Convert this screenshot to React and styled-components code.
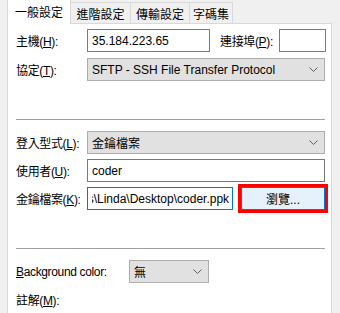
import { useLayoutEffect, useRef } from "react";
import styled, { createGlobalStyle } from "styled-components";

const Global = createGlobalStyle`
  html, body { margin: 0; padding: 0; background: #f0f0f0; }
  body {
    font-family: "Liberation Sans", "Noto Sans CJK TC", sans-serif;
    font-size: 12px;
    color: #000;
  }
`;

const Window = styled.div`
  width: 340px;
  height: 313px;
  overflow: hidden;
  background: #f0f0f0;
`;

const TabStrip = styled.div`
  display: flex;
  align-items: flex-end;
  height: 23px;
  padding-left: 7px;
`;

const Tab = styled.div`
  position: relative;
  display: flex;
  align-items: center;
  justify-content: center;
  box-sizing: border-box;
  width: ${(p) => p.$w}px;
  height: ${(p) => (p.$active ? 25 : 21)}px;
  margin-bottom: ${(p) => (p.$active ? -1 : 0)}px;
  margin-left: ${(p) => (p.$first ? 0 : -1)}px;
  padding-bottom: ${(p) => (p.$active ? 2 : 0)}px;
  border: 1px solid #d9d9d9;
  border-bottom: none;
  background: ${(p) => (p.$active ? "#fff" : "#f0f0f0")};
  z-index: ${(p) => (p.$active ? 2 : 1)};
`;

const Panel = styled.div`
  box-sizing: border-box;
  width: 325px;
  height: 320px;
  margin-left: 7px;
  padding: 5px 5px 0 8px;
  background: #fff;
  border: 1px solid #d9d9d9;
  display: flex;
  flex-direction: column;
`;

const Row = styled.div`
  display: flex;
  align-items: center;
  height: 23px;
  margin-top: ${(p) => p.$mt || 0}px;
`;

const Label = styled.label`
  width: ${(p) => (p.$w ? `${p.$w}px` : "auto")};
  flex: none;
  white-space: nowrap;
  letter-spacing: -0.35px;
  margin-left: ${(p) => p.$ml || 0}px;
`;

const TextBox = styled.input`
  box-sizing: border-box;
  width: ${(p) => p.$w}px;
  height: 23px;
  flex: none;
  margin: 0 0 0 ${(p) => p.$ml || 0}px;
  padding: 0 3px 0 4px;
  font: inherit;
  color: #000;
  background: #fff;
  border: 1px solid ${(p) => (p.$focus ? "#0078d7" : "#7a7a7a")};
  border-radius: 0;
  outline: none;
`;

const Select = styled.div`
  box-sizing: border-box;
  width: ${(p) => p.$w}px;
  height: 23px;
  flex: none;
  display: flex;
  align-items: center;
  justify-content: space-between;
  padding: 0 6px 0 4px;
  background: #e1e1e1;
  border: 1px solid #adadad;
`;

const Button = styled.button`
  box-sizing: border-box;
  width: 84px;
  height: 23px;
  margin-left: 8px;
  flex: none;
  font: inherit;
  color: #000;
  background: #e5f1fb;
  border: 1px solid #0078d7;
  outline: 3px solid #ff0000;
  outline-offset: 0;
  padding: 0;
`;

const Separator = styled.div`
  height: 1px;
  width: 309px;
  background: #a0a0a0;
  margin-top: ${(p) => p.$mt}px;
`;

const Chevron = () => (
  <svg width="9" height="5" viewBox="0 0 9 5">
    <polyline points="0.5,0.5 4.5,4.5 8.5,0.5" fill="none" stroke="#606060" strokeWidth="1" />
  </svg>
);

export default function App() {
  const keyRef = useRef(null);
  useLayoutEffect(() => {
    const el = keyRef.current;
    if (el) el.scrollLeft = el.scrollWidth;
  }, []);

  return (
    <Window>
      <Global />
      <TabStrip>
        <Tab $active $first $w={64}>一般設定</Tab>
        <Tab $w={61}>進階設定</Tab>
        <Tab $w={60}>傳輸設定</Tab>
        <Tab $w={44}>字碼集</Tab>
      </TabStrip>
      <Panel>
        <Row>
          <Label $w={71}>主機(<u>H</u>):</Label>
          <TextBox $w={123} readOnly value="35.184.223.65" />
          <Label $ml={10}>連接埠(<u>P</u>):</Label>
          <TextBox $w={47} $ml={6} readOnly value="" />
        </Row>
        <Row $mt={6}>
          <Label $w={71}>協定(<u>T</u>):</Label>
          <Select $w={238}>
            <span>SFTP - SSH File Transfer Protocol</span>
            <Chevron />
          </Select>
        </Row>
        <Separator $mt={38} />
        <Row $mt={11}>
          <Label $w={71}>登入型式(<u>L</u>):</Label>
          <Select $w={238}>
            <span>金鑰檔案</span>
            <Chevron />
          </Select>
        </Row>
        <Row $mt={5}>
          <Label $w={71}>使用者(<u>U</u>):</Label>
          <TextBox $w={238} readOnly value="coder" />
        </Row>
        <Row $mt={5}>
          <Label $w={71}>金鑰檔案(<u>K</u>):</Label>
          <TextBox
            ref={keyRef}
            $w={146}
            $focus
            readOnly
            value="C:\Users\Linda\Desktop\coder.ppk"
          />
          <Button>瀏覽...</Button>
        </Row>
        <Separator $mt={38} />
        <Row $mt={11}>
          <Label $w={113}><u>B</u>ackground color:</Label>
          <Select $w={80}>
            <span>無</span>
            <Chevron />
          </Select>
        </Row>
        <Row $mt={5}>
          <Label>註解(<u>M</u>):</Label>
        </Row>
      </Panel>
    </Window>
  );
}
